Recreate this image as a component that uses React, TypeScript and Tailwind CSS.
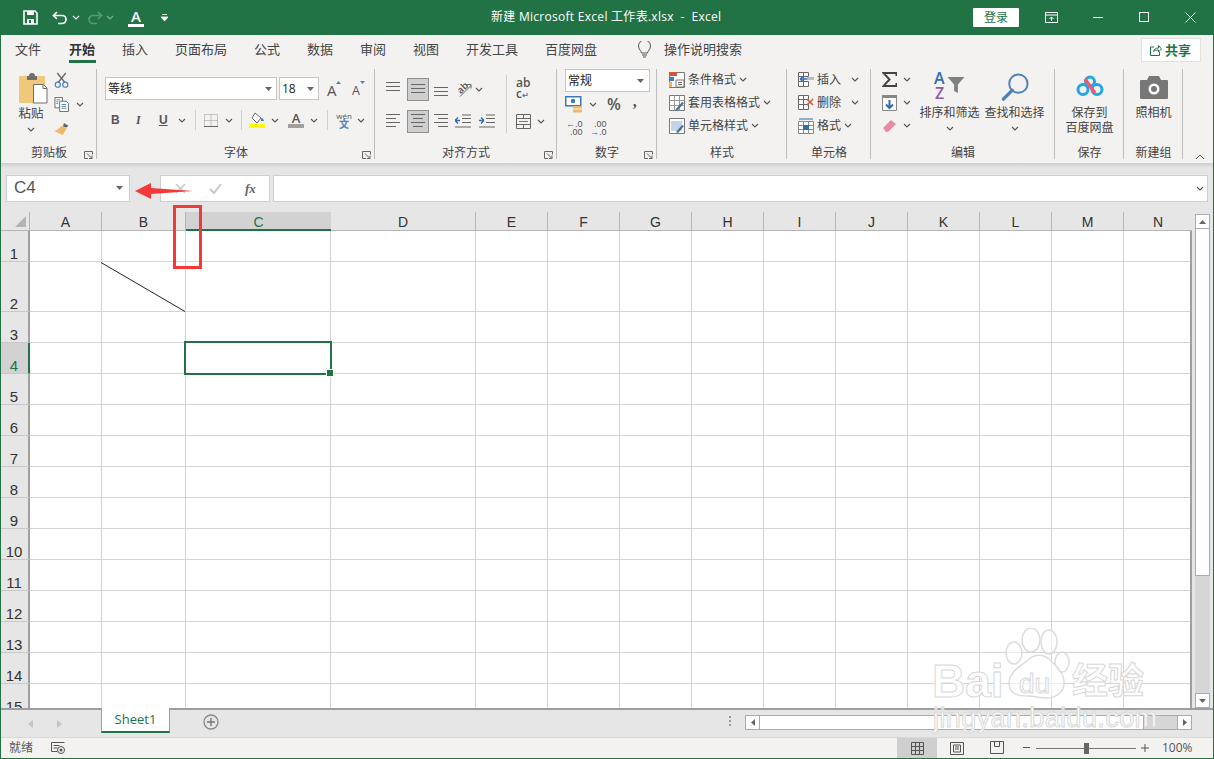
import React from "react";

const FONT = { fontFamily: '"Open Sans","Noto Sans CJK SC","Noto Sans",sans-serif' };
const ARIAL = { fontFamily: '"Liberation Sans",sans-serif' };

function Chev({ c = "#555", className = "" }: { c?: string; className?: string }) {
  return (
    <svg width="8" height="5" viewBox="0 0 8 5" className={"shrink-0 " + className}>
      <path d="M1 1l3 3 3-3" fill="none" stroke={c} strokeWidth="1.1" />
    </svg>
  );
}
function Tri({ className = "" }: { className?: string }) {
  return (
    <svg width="7" height="4" viewBox="0 0 7 4" className={"shrink-0 " + className}>
      <path d="M0 0h7L3.500 4z" fill="#666" />
    </svg>
  );
}
function Launcher() {
  return (
    <svg width="9" height="8" viewBox="0 0 9 8" className="absolute right-[4px] bottom-0">
      <path d="M8.500 3.500V.5H.5v7H4M3 2.500l5 5M8 4.500v3H5" fill="none" stroke="#666" strokeWidth="1" />
    </svg>
  );
}
function Group({ w, label, launcher, children }: { w: number; label: string; launcher?: boolean; children: React.ReactNode }) {
  return (
    <div className="relative shrink-0 flex flex-col h-[90px] mt-[4px]" style={{ width: w }}>
      <div className="h-[74px] relative flex">{children}</div>
      <div className="h-[16px] text-center text-[12px] leading-[20px] text-[#444]">{label}</div>
      {launcher && <Launcher />}
      <div className="absolute right-0 top-0 bottom-0 w-px bg-[#bdbdbd]" />
    </div>
  );
}
function Lines({ w = 14, n = 3, a = "c" }: { w?: number; n?: number; a?: string }) {
  const rows = Array.from({ length: n }, (_, i) => i);
  return (
    <svg width={w} height={n * 4} viewBox={`0 0 ${w} ${n * 4}`} className="shrink-0">
      {rows.map((i) => {
        const short = i % 2 === 1;
        const l = short && a !== "f" ? w - 4 : w;
        const x = a === "l" ? 0 : a === "r" ? w - l : (w - l) / 2;
        return <rect key={i} x={x} y={i * 4 + 1} width={l} height="1" fill="#666" />;
      })}
    </svg>
  );
}
function MiniGrid({ children }: { children?: React.ReactNode }) {
  return (
    <svg width="16" height="16" viewBox="0 0 16 16" className="shrink-0">
      {children}
    </svg>
  );
}
function StyleRow({ icon, text }: { icon: React.ReactNode; text: string }) {
  return (
    <div className="flex items-center h-[23px] text-[12px] text-[#444]">
      {icon}
      <span className="ml-[3px]">{text}</span>
      <Chev className="ml-[3px]" />
    </div>
  );
}
const tableIcon = (
  <MiniGrid>
    <path d="M.5.5h15v15H.5z" fill="#fff" stroke="#777" />
    <path d="M.5 5.500h15M.5 10.500h15M5.500.5v15M10.500.5v15" stroke="#999" />
    <path d="M7 14l6-7 2 1-6 7z" fill="#41719c" />
    <path d="M6 15.500l3-.5-1-2z" fill="#41719c" />
  </MiniGrid>
);

function Ribbon() {
  return (
    <div className="flex h-[98px] bg-[#f3f2f1] shrink-0 relative pl-[1px] text-[#444]">
      {/* clipboard */}
      <Group w={96} label="剪贴板" launcher>
        <div className="w-[53px] pl-[17px] flex flex-col items-start shrink-0">
          <svg width="30" height="31" viewBox="0 0 30 31" className="mt-[4px] shrink-0">
            <path d="M1 3h25a1 1 0 011 1v25a1 1 0 01-1 1H2a1 1 0 01-1-1z" fill="#f0c87c" />
            <path d="M9 3h2a3 3 0 016 0h2v4H9z" fill="#6e6e6e" />
            <path d="M15.500 11.500h10l3.500 3.500v15h-13.500z" fill="#fff" stroke="#6e6e6e" />
            <path d="M25 11.500v4h4" fill="none" stroke="#6e6e6e" />
          </svg>
          <div className="text-[12.5px] leading-[18px] mt-[1px] w-[26px] text-center">粘贴</div>
          <Chev className="ml-[9px] mt-[4px]" />
        </div>
        <div className="flex flex-col pt-[3px]">
          <svg width="16" height="16" viewBox="0 0 16 17">
            <path d="M3 1l8 10M12 1L4 11" stroke="#666" strokeWidth="1.500" fill="none" />
            <circle cx="3.500" cy="13.500" r="2.700" fill="none" stroke="#4d82b8" strokeWidth="1.300" />
            <circle cx="11.500" cy="13.500" r="2.700" fill="none" stroke="#4d82b8" strokeWidth="1.300" />
          </svg>
          <div className="flex items-center mt-[9px]">
            <svg width="16" height="15" viewBox="0 0 16 16">
              <path d="M.5.5h8v11h-8z" fill="#fff" stroke="#666" />
              <path d="M5.500 4.500h7l2.500 2.500v8.500h-9.500z" fill="#fff" stroke="#666" />
              <path d="M7.500 8h5M7.500 10h5M7.500 12h5" stroke="#4d82b8" />
              <path d="M2 3h4M2 5h2M2 7h2" stroke="#4d82b8" />
            </svg>
            <Chev className="ml-[6px]" />
          </div>
          <svg width="16" height="14" viewBox="0 0 16 15" className="mt-[10px]">
            <path d="M10 1l5 3-2 2-4-1z" fill="#666" />
            <path d="M8 4l5 3-4 7-9-4 3-2z" fill="#eeb96d" />
          </svg>
        </div>
      </Group>

      {/* font */}
      <Group w={278} label="字体" launcher>
        <div className="flex flex-col pl-[8px]">
          <div className="flex items-center mt-[8px]">
            <div className="w-[172px] h-[23px] bg-white border border-[#c6c6c6] flex items-center justify-between pl-[2px] pr-[4px] text-[12px] text-[#222]">
              等线
              <Tri />
            </div>
            <div className="ml-[2px] w-[40px] h-[23px] bg-white border border-[#c6c6c6] flex items-center justify-between pl-[2px] pr-[4px] text-[12px] text-[#222]">
              18
              <Tri />
            </div>
            <div className="ml-[8px] text-[15px] text-[#555] leading-none relative w-[11px] mt-[3px]">
              A
              <svg width="5" height="3" viewBox="0 0 5 3" className="absolute -right-[3px] -top-[2px]"><path d="M0 3h5L2.500 0z" fill="#4d82b8" /></svg>
            </div>
            <div className="ml-[14px] text-[12.5px] text-[#555] leading-none relative w-[9px] mt-[5px]">
              A
              <svg width="5" height="3" viewBox="0 0 5 3" className="absolute -right-[4px] -top-[4px]"><path d="M0 0h5L2.500 3z" fill="#4d82b8" /></svg>
            </div>
          </div>
          <div className="flex items-center h-[24px] mt-[8px] text-[#555]">
            <span className="w-[10px] ml-[6px] text-[12px] font-bold" style={ARIAL}>B</span>
            <span className="w-[10px] ml-[15px] text-[12px] font-bold italic" style={{ fontFamily: '"Liberation Serif",serif' }}>I</span>
            <span className="w-[10px] ml-[13px] text-[12px] font-bold underline" style={ARIAL}>U</span>
            <Chev className="ml-[9px]" />
            <div className="w-px h-[20px] bg-[#cfcfcf] ml-[9px]" />
            <svg width="14" height="13" viewBox="0 0 14 13" className="ml-[8px]">
              <path d="M.5.5h13v12H.5zM.5 6.500h13M7 .5v12" fill="none" stroke="#999" strokeDasharray="1 1" />
              <path d="M0 12.500h14" stroke="#666" />
            </svg>
            <Chev className="ml-[7px]" />
            <div className="w-px h-[20px] bg-[#cfcfcf] ml-[8px]" />
            <svg width="16" height="16" viewBox="0 0 16 16" className="ml-[7px]">
              <path d="M6 1l6 5-4 5-5-5z" fill="#fff" stroke="#666" />
              <path d="M12 6c2 0 3 2 3 3h-3z" fill="#4d82b8" />
              <rect x="0" y="12" width="16" height="4" fill="#ffff00" />
            </svg>
            <Chev className="ml-[6px]" />
            <div className="ml-[9px] relative w-[16px] h-[16px] flex flex-col items-center">
              <span className="text-[13px] leading-[12px] font-semibold text-[#555]">A</span>
              <div className="w-[16px] h-[4px] bg-[#a0a0a0]" />
            </div>
            <Chev className="ml-[6px]" />
            <div className="w-px h-[20px] bg-[#cfcfcf] ml-[9px]" />
            <div className="ml-[8px] w-[16px] flex flex-col items-center leading-[9px]">
              <span className="text-[8px] text-[#555]">wén</span>
              <span className="text-[10px] text-[#4d82b8] font-bold">文</span>
            </div>
            <Chev className="ml-[5px]" />
          </div>
        </div>
      </Group>

      {/* alignment */}
      <Group w={182} label="对齐方式" launcher>
        <div className="flex flex-col pl-[11px] w-[131px] shrink-0">
          <div className="flex items-center h-[24px] mt-[8px]">
            <div className="w-[16px] h-[23px] pt-[3px]"><Lines w={14} n={3} a="f" /></div>
            <div className="w-[22px] h-[23px] bg-[#cfcfcf] border border-[#8f8f8f] flex items-center justify-center ml-[5px]"><Lines w={14} n={3} a="f" /></div>
            <div className="w-[16px] h-[23px] ml-[5px] pt-[8px]"><Lines w={14} n={3} a="f" /></div>
            <div className="ml-[6px] w-[16px] h-[15px] relative">
              <span className="absolute left-[1px] top-[0px] text-[9.5px] leading-[12px] text-[#555] -rotate-45 font-semibold">ab</span>
              <svg width="16" height="15" viewBox="0 0 16 15" className="absolute left-0 top-0">
                <path d="M4 14.500L15 3.500M11 2.500h4v4" fill="none" stroke="#666" />
              </svg>
            </div>
            <Chev className="ml-[3px]" />
          </div>
          <div className="flex items-center h-[24px] mt-[8px]">
            <div className="w-[16px]"><Lines w={14} n={4} a="l" /></div>
            <div className="w-[22px] h-[23px] bg-[#cfcfcf] border border-[#8f8f8f] flex items-center justify-center ml-[5px]"><Lines w={14} n={4} a="c" /></div>
            <div className="w-[16px] ml-[5px]"><Lines w={14} n={4} a="r" /></div>
            <svg width="16" height="14" viewBox="0 0 16 14" className="ml-[5px]">
              <path d="M7 1h9M7 4.500h9M7 8.500h9M0 13h16" stroke="#666" />
              <path d="M0 6.500h5M0 6.500l3-3M0 6.500l3 3" stroke="#2f6db3" fill="none" strokeWidth="1.400" />
            </svg>
            <svg width="16" height="14" viewBox="0 0 16 14" className="ml-[8px]">
              <path d="M7 1h9M7 4.500h9M7 8.500h9M0 13h16" stroke="#666" />
              <path d="M0 6.500h5M5 6.500l-3-3M5 6.500l-3 3" stroke="#2f6db3" fill="none" strokeWidth="1.400" />
            </svg>
          </div>
        </div>
        <div className="w-px h-[58px] bg-[#cfcfcf] mt-[6px] shrink-0" />
        <div className="flex flex-col pl-[9px]">
          <div className="h-[24px] mt-[8px] w-[14px] text-[12px] leading-[11px] text-[#555] font-semibold whitespace-nowrap">
            <div>ab</div>
            <div>c<span className="text-[#4d82b8] text-[8px]">↵</span></div>
          </div>
          <div className="flex items-center h-[24px] mt-[8px]">
            <svg width="15" height="15" viewBox="0 0 15 15">
              <path d="M.5.5h14v14H.5zM.5 4.500h14M.5 10.500h14M7.500.5v4M7.500 10.500v4" fill="none" stroke="#666" />
              <path d="M3 7.500h9" stroke="#4d82b8" />
            </svg>
            <Chev className="ml-[6px]" />
          </div>
        </div>
      </Group>

      {/* number */}
      <Group w={100} label="数字" launcher>
        <div className="flex flex-col pl-[8px]">
          <div className="w-[85px] h-[23px] bg-white border border-[#c6c6c6] flex items-center justify-between pl-[2px] pr-[5px] text-[12px] text-[#222]">
            常规
            <Tri />
          </div>
          <div className="flex items-center h-[24px]">
            <svg width="17" height="17" viewBox="0 0 17 17" className="ml-[0px]">
              <rect x=".75" y=".75" width="15" height="9" fill="#fff" stroke="#3a79b8" strokeWidth="1.500" />
              <circle cx="8" cy="5" r="2.200" fill="#3a79b8" />
              <path d="M8 10h9v2.500H8zM8 13.500h9v3H8z" fill="#eeb96d" />
            </svg>
            <Chev className="ml-[7px]" />
            <span className="ml-[10px] text-[16px] leading-none text-[#555] font-semibold">%</span>
            <span className="ml-[12px] text-[16px] leading-none text-[#555] font-bold mt-[-4px]" style={{ fontFamily: '"Liberation Serif",serif' }}>,</span>
          </div>
          <div className="flex items-center h-[24px]">
            <div className="ml-[1px] w-[18px] flex flex-col text-[9px] leading-[8px] text-[#555]" style={ARIAL}>
              <span><span className="text-[#2f6db3]">←</span>.0</span>
              <span className="pl-[4px]">.00</span>
            </div>
            <div className="ml-[6px] w-[18px] flex flex-col text-[9px] leading-[8px] text-[#555]" style={ARIAL}>
              <span className="pl-[4px]">.00</span>
              <span><span className="text-[#2f6db3]">→</span>.0</span>
            </div>
          </div>
        </div>
      </Group>

      {/* styles */}
      <Group w={130} label="样式">
        <div className="flex flex-col pl-[12px] mt-[-1px]">
          <StyleRow text="条件格式" icon={
            <MiniGrid>
              <path d="M.5.5h15v15H.5z" fill="#fff" stroke="#777" />
              <path d="M0 0h8v4H0z" fill="#d0573a" /><path d="M0 5h5v4H0z" fill="#3f7cbf" />
              <path d="M0 10h3v5H0z" fill="#f0b05a" />
              <path d="M7 8h8v7H7z" fill="#fff" stroke="#777" /><path d="M9 10.500h4M9 12.500h4" stroke="#666" />
            </MiniGrid>} />
          <StyleRow text="套用表格格式" icon={tableIcon} />
          <StyleRow text="单元格样式" icon={
            <MiniGrid>
              <path d="M.5.5h15v15H.5z" fill="#fff" stroke="#777" />
              <path d="M2 3h11v10H2z" fill="#c3d4e6" />
              <path d="M7 14l6-7 2 1-6 7z" fill="#41719c" />
            </MiniGrid>} />
        </div>
      </Group>

      {/* cells */}
      <Group w={84} label="单元格">
        <div className="flex flex-col pl-[11px] mt-[-1px] text-[12px]">
          <div className="flex items-center h-[23px]">
            <MiniGrid>
              <path d="M.5.5h5v4h-5zM.5 4.500h5v5h-5zM.5 9.500h5v5h-5zM5.500 9.500h5v5h-5zM5.500.5h5v4h-5z" fill="#fff" stroke="#666" />
              <path d="M9 5h7v3H9z" fill="#bbb" /><path d="M2 7h7M2 7l3-2.500M2 7l3 2.500" stroke="#2f6db3" fill="none" strokeWidth="1.300" />
            </MiniGrid>
            <span className="ml-[3px]">插入</span><Chev className="ml-[10px]" />
          </div>
          <div className="flex items-center h-[23px]">
            <MiniGrid>
              <path d="M.5.5h5v4h-5zM.5 4.500h5v5h-5zM.5 9.500h5v5h-5zM5.500 9.500h5v5h-5zM5.500.5h5v4h-5z" fill="#fff" stroke="#666" />
              <path d="M9 4l6 6M15 4l-6 6" stroke="#d0573a" strokeWidth="1.500" />
            </MiniGrid>
            <span className="ml-[3px]">删除</span><Chev className="ml-[10px]" />
          </div>
          <div className="flex items-center h-[23px]">
            <MiniGrid>
              <path d="M.5 3.500h15v12H.5zM.5 7.500h15M.5 11.500h15M5.500 3.500v12M10.500 3.500v12" fill="#fff" stroke="#888" />
              <path d="M5 7h6v5H5z" fill="#2f6db3" /><path d="M1 1h14" stroke="#2f6db3" />
            </MiniGrid>
            <span className="ml-[3px]">格式</span><Chev className="ml-[3px]" />
          </div>
        </div>
      </Group>

      {/* editing */}
      <Group w={184} label="编辑">
        <div className="flex flex-col pl-[11px] w-[47px] shrink-0 mt-[-1px]">
          <div className="flex items-center h-[23px]">
            <svg width="15" height="15" viewBox="0 0 15 15" className="shrink-0">
              <path d="M14.500 4V1H1.500l6 6.500-6 6.500h13v-3" fill="none" stroke="#444" strokeWidth="2" />
            </svg>
            <Chev className="ml-[6px]" />
          </div>
          <div className="flex items-center h-[23px]">
            <svg width="15" height="16" viewBox="0 0 15 16" className="shrink-0"><path d="M.5.5h14v15H.5z" fill="#fff" stroke="#888" /><path d="M0 0h15v3H0z" fill="#888" /><path d="M7.500 5v8M4 9.500l3.500 3.500 3.500-3.500" fill="none" stroke="#2f6db3" strokeWidth="2" /></svg>
            <Chev className="ml-[6px]" />
          </div>
          <div className="flex items-center h-[23px]">
            <svg width="15" height="14" viewBox="0 0 15 14" className="shrink-0"><path d="M1 9l8-8 5 4-8 8H4z" fill="#e88ba0" /></svg>
            <Chev className="ml-[6px]" />
          </div>
        </div>
        <div className="w-[65px] shrink-0 ml-[-1px] flex flex-col items-center text-[12px] whitespace-nowrap">
          <div className="h-[29px] relative w-[31px] mt-[4px]">
            <span className="absolute left-0 top-[-2px] text-[16px] font-semibold leading-[15px] text-[#2f6db3]">A</span>
            <span className="absolute left-[1px] top-[13px] text-[16px] font-semibold leading-[15px] text-[#8a5bb0]">Z</span>
            <svg width="18" height="16" viewBox="0 0 18 17" className="absolute right-0 top-[4px]"><path d="M0 0h18l-7 8v9l-4-2V8z" fill="#808080" /></svg>
          </div>
          <div className="leading-[17px] mt-[2px]">排序和筛选</div>
          <Chev className="mt-[5px]" />
        </div>
        <div className="w-[65px] shrink-0 flex flex-col items-center text-[12px] whitespace-nowrap">
          <svg width="30" height="29" viewBox="0 0 30 30" className="mt-[4px]">
            <circle cx="18.500" cy="11" r="9.500" fill="none" stroke="#4d82b8" strokeWidth="2" />
            <path d="M12 18L3 27" stroke="#4d82b8" strokeWidth="3.500" strokeLinecap="round" />
          </svg>
          <div className="leading-[17px] mt-[2px]">查找和选择</div>
          <Chev className="mt-[5px]" />
        </div>
      </Group>

      {/* save */}
      <Group w={69} label="保存">
        <div className="w-full flex flex-col items-center text-[12px]">
          <svg width="28" height="22" viewBox="0 0 28 22" className="mt-[6px]">
            <circle cx="7" cy="14.500" r="5" fill="none" stroke="#1fa6ea" strokeWidth="3" />
            <circle cx="21" cy="14.500" r="5" fill="none" stroke="#1fa6ea" strokeWidth="3" />
            <circle cx="14" cy="6.500" r="4.500" fill="none" stroke="#1fa6ea" strokeWidth="3" />
            <path d="M9 4L19 18" stroke="#ee5a6f" strokeWidth="3.500" />
          </svg>
          <div className="leading-[15px] mt-[8px]">保存到</div>
          <div className="leading-[15px]">百度网盘</div>
        </div>
      </Group>

      {/* camera */}
      <Group w={59} label="新建组">
        <div className="w-full flex flex-col items-center text-[12px]">
          <svg width="28" height="23" viewBox="0 0 28 23" className="mt-[7px]">
            <path d="M1 4h6l2-4h10l2 4h6a1 1 0 011 1v17a1 1 0 01-1 1H1a1 1 0 01-1-1V5a1 1 0 011-1z" fill="#777" />
            <circle cx="14" cy="13" r="5.500" fill="#fff" />
            <circle cx="14" cy="13" r="3" fill="#777" />
          </svg>
          <div className="leading-[15px] mt-[6px]">照相机</div>
        </div>
      </Group>

      <svg width="10" height="6" viewBox="0 0 10 6" className="absolute right-[9px] bottom-[3px]"><path d="M1 5l4-4 4 4" fill="none" stroke="#555" /></svg>
    </div>
  );
}

const COLS: [string, number][] = [["A", 72], ["B", 84], ["C", 145], ["D", 145], ["E", 72], ["F", 72], ["G", 72], ["H", 72], ["I", 72], ["J", 72], ["K", 72], ["L", 72], ["M", 72], ["N", 69]];
const ROWS: number[] = [31, 50, 31, 31, 31, 31, 31, 31, 31, 31, 31, 31, 31, 31, 31];

export default function App() {
  return (
    <div className="w-[1214px] h-[759px] overflow-hidden relative flex flex-col bg-[#e6e6e6] text-[#444]" style={FONT}>
      {/* title bar */}
      <div className="h-[35px] bg-[#217346] flex items-center shrink-0 text-white relative">
        <svg width="15" height="15" viewBox="0 0 15 15" className="ml-[23px]">
          <path d="M1 1h11l2 2v11H1z" fill="none" stroke="#fff" strokeWidth="1.600" />
          <path d="M4 1h7v4H4zM4 9h7v5H4z" fill="#fff" />
          <path d="M6 10h2v3H6z" fill="#217346" />
        </svg>
        <svg width="16" height="14" viewBox="0 0 16 14" className="ml-[14px]">
          <path d="M5 1L1.500 4.500 5 8" fill="none" stroke="#fff" strokeWidth="1.700" />
          <path d="M2 4.500h8a4 4 0 010 8H6" fill="none" stroke="#fff" strokeWidth="1.700" />
        </svg>
        <Chev c="#fff" className="ml-[4px]" />
        <svg width="16" height="14" viewBox="0 0 16 14" className="ml-[7px] opacity-40">
          <path d="M11 1l3.500 3.500L11 8" fill="none" stroke="#a8d5bd" strokeWidth="1.700" />
          <path d="M14 4.500H6a4 4 0 000 8h4" fill="none" stroke="#a8d5bd" strokeWidth="1.700" />
        </svg>
        <Chev c="#7fb59a" className="ml-[3px]" />
        <div className="ml-[14px] w-[16px] flex flex-col items-center">
          <span className="text-[15px] leading-[15px] font-semibold">A</span>
          <div className="w-[16px] h-[3px] bg-white" />
        </div>
        <svg width="7" height="7" viewBox="0 0 7 7" className="ml-[17px]"><path d="M1 .5h5M0 3h7L3.500 7z" stroke="#fff" fill="#fff" strokeWidth=".8" /></svg>
        <div className="absolute left-[491px] top-[8px] text-[12px] leading-[18px] whitespace-pre tracking-[0.28px]">新建 Microsoft Excel 工作表.xlsx  -  Excel</div>
        <div className="absolute left-[973px] top-[8px] w-[46px] h-[19px] bg-white rounded-[1px] flex items-center justify-center text-[12px] text-[#217346]">登录</div>
        <svg width="13" height="11" viewBox="0 0 13 11" className="absolute left-[1045px] top-[12px]">
          <path d="M.5.5h12v10H.5zM.5 3h12" fill="none" stroke="#fff" />
          <path d="M6.500 9V5M4.500 7l2-2 2 2" fill="none" stroke="#fff" />
        </svg>
        <div className="absolute left-[1093px] top-[17px] w-[10px] h-px bg-white" />
        <div className="absolute left-[1139px] top-[12px] w-[10px] h-[10px] border border-white" />
        <svg width="11" height="11" viewBox="0 0 11 11" className="absolute left-[1185px] top-[12px]"><path d="M.5.5l10 10M10.500.5l-10 10" stroke="#fff" /></svg>
      </div>

      {/* tabs */}
      <div className="h-[30px] bg-[#f3f2f1] flex items-start shrink-0 text-[13px] leading-[28px] text-[#444] relative">
        <div className="ml-[15px] w-[54px]">文件</div>
        <div className="w-[53px] h-[28px] font-semibold text-[#333] relative">开始
          <div className="absolute left-0 w-[27px] bottom-0 h-[3px] bg-[#217346]" />
        </div>
        <div className="w-[53px]">插入</div>
        <div className="w-[79px]">页面布局</div>
        <div className="w-[53px]">公式</div>
        <div className="w-[53px]">数据</div>
        <div className="w-[53px]">审阅</div>
        <div className="w-[53px]">视图</div>
        <div className="w-[79px]">开发工具</div>
        <div className="w-[92px]">百度网盘</div>
        <svg width="13" height="18" viewBox="0 0 13 18" className="mt-[6px] ml-[1px]">
          <path d="M3.500 12c0-2-3-3.500-3-7a6 6 0 0112 0c0 3.500-3 5-3 7zM4 14h5M5 16h3" fill="none" stroke="#555" />
        </svg>
        <div className="ml-[13px]">操作说明搜索</div>
        <div className="absolute left-[1141px] top-[3px] w-[60px] h-[24px] bg-white border border-[#e1e1e1] flex items-center pl-[8px] text-[#217346] font-semibold">
          <svg width="12" height="12" viewBox="0 0 12 12" className="mr-[3px]"><path d="M4 3H.5v8.500h9V8M3.500 7.500c.5-2 2-3.500 5-3.500V1.500l3 3.500-3 3V6c-2.500 0-4 .5-5 1.500z" fill="none" stroke="#217346" /></svg>
          共享
        </div>
      </div>

      <Ribbon />

      {/* formula bar */}
      <div className="h-[49px] shrink-0 relative bg-[#e6e6e6] flex pl-[6px] pt-[12px]">
        <div className="absolute left-0 right-0 top-0 h-[5px] bg-gradient-to-b from-[#cfcfcf] to-[#e6e6e6]" />
        <div className="w-[124px] h-[27px] bg-white border border-[#cfcfcf] flex items-center justify-between pl-[7px] pr-[6px] text-[17px] leading-[22px] pb-[2px] text-[#555]" style={ARIAL}>
          C4
          <Tri />
        </div>
        <div className="w-[110px] h-[27px] ml-[30px] bg-white border border-[#cfcfcf] flex items-center text-[#bbb] relative">
          <svg width="11" height="11" viewBox="0 0 11 11" className="ml-[14px]"><path d="M1 1l9 9M10 1l-9 9" stroke="#c8c8c8" strokeWidth="1.600" /></svg>
          <svg width="13" height="11" viewBox="0 0 13 11" className="ml-[23px]"><path d="M1 6l4 4 7-9" fill="none" stroke="#c8c8c8" strokeWidth="2" /></svg>
          <span className="ml-[23px] text-[13px] italic font-bold text-[#666]" style={{ fontFamily: '"Liberation Serif",serif' }}>fx</span>
        </div>
        <div className="ml-[3px] w-[935px] h-[27px] bg-white border border-[#cfcfcf] flex items-center justify-end pr-[3px]">
          <Chev />
        </div>
      </div>

      {/* sheet area: headers and cells, then the vertical scrollbar */}
      <div className="h-[496px] shrink-0 flex relative">
        <div className="w-[1192px] shrink-0 flex flex-col">
          <div className="h-[19px] shrink-0 flex bg-[#e6e6e6] text-[14px] text-[#333]" style={ARIAL}>
            <div className="w-[30px] shrink-0 relative border-r border-b border-[#b5b5b5]">
              <svg width="11" height="11" viewBox="0 0 11 11" className="absolute right-[3px] bottom-[3px]"><path d="M11 0v11H0z" fill="#b4b4b4" /></svg>
            </div>
            {COLS.map(([n, w]) => (
              <div key={n} style={{ width: w }} className={"shrink-0 text-center leading-[21px] " + (n === "C" ? "bg-[#d2d2d2] border-b-2 border-[#217346] text-[#217346]" : "border-r border-b border-[#b5b5b5]")}>
                {n}
              </div>
            ))}
          </div>
          <div className="flex-1 overflow-hidden border-r-2 border-[#a0a0a0] bg-white">
            {ROWS.map((h, i) => (
              <div key={i} className="flex" style={{ height: h }}>
                <div className={"w-[30px] shrink-0 flex items-end justify-center text-[15px] leading-[15px] border-b border-r-2 border-b-[#c8c8c8] " + (i === 3 ? "bg-[#d2d2d2] text-[#217346] border-r-[#217346]" : "bg-[#e6e6e6] text-[#333] border-r-[#a0a0a0]")} style={ARIAL}>
                  {i + 1}
                </div>
                {COLS.map(([n, w]) => (
                  <div key={n} style={{ width: w }} className="shrink-0 border-r border-b border-[#d4d4d4]" />
                ))}
              </div>
            ))}
          </div>
        </div>
        {/* vertical scrollbar */}
        <div className="w-[20px] shrink-0 bg-[#e6e6e6] pl-[3px] pt-[2px] flex flex-col">
          <div className="w-[15px] h-[15px] shrink-0 bg-white border border-[#ababab] flex items-center justify-center"><svg width="7" height="4" viewBox="0 0 7 4"><path d="M0 4h7L3.500 0z" fill="#666" /></svg></div>
          <div className="w-[15px] flex-1 flex flex-col bg-[#d6d6d6]">
            <div className="w-[15px] h-[347px] bg-white border border-[#ababab] border-t-0" />
          </div>
          <div className="w-[15px] h-[15px] shrink-0 bg-white border border-[#ababab] flex items-center justify-center"><Tri /></div>
        </div>
        {/* diagonal, selection */}
        <svg width="85" height="51" viewBox="0 0 85 51" className="absolute left-[101px] top-[50px]"><path d="M0 .5L84 49.500" stroke="#222" strokeWidth="1" /></svg>
        <div className="absolute left-[184px] top-[129px] w-[148px] h-[34px] border-2 border-[#217346]">
          <div className="absolute -right-[4px] -bottom-[4px] w-[6px] h-[6px] bg-[#217346] border border-white box-content" />
        </div>
      </div>

      {/* sheet tabs */}
      <div className="h-[29px] shrink-0 flex border-t-2 border-[#9e9e9e] bg-[#e6e6e6] relative">
        <div className="w-[101px] shrink-0 flex items-center pl-[28px]">
          <svg width="5" height="8" viewBox="0 0 5 8"><path d="M5 0v8L0 4z" fill="#c4c4c4" /></svg>
          <svg width="5" height="8" viewBox="0 0 5 8" className="ml-[24px]"><path d="M0 0v8l5-4z" fill="#c4c4c4" /></svg>
        </div>
        <div className="w-[69px] h-[25px] -mt-[2px] pt-[1px] bg-white border-x border-[#9e9e9e] border-b-2 border-b-[#217346] flex items-center justify-center text-[13px] text-[#217346]">Sheet1</div>
        <svg width="16" height="16" viewBox="0 0 16 16" className="ml-[33px] mt-[4px]"><circle cx="8" cy="8" r="7" fill="none" stroke="#8a8a8a" strokeWidth="1.300" /><path d="M8 4v8M4 8h8" stroke="#777" strokeWidth="1.400" /></svg>
        <div className="absolute left-[729px] top-[6px] flex flex-col gap-[2px]">
          <div className="w-[2px] h-[2px] bg-[#999]" /><div className="w-[2px] h-[2px] bg-[#999]" /><div className="w-[2px] h-[2px] bg-[#999]" />
        </div>
        <div className="absolute left-[745px] top-[5px] w-[447px] h-[15px] flex bg-[#d6d6d6] border border-[#ababab]">
          <div className="w-[14px] h-full bg-white border-r border-[#ababab] flex items-center justify-center"><svg width="4" height="7" viewBox="0 0 4 7"><path d="M4 0v7L0 3.500z" fill="#666" /></svg></div>
          <div className="w-[384px] h-full bg-white border-r border-[#ababab]" />
          <div className="flex-1" />
          <div className="w-[14px] h-full bg-white border-l border-[#ababab] flex items-center justify-center"><svg width="4" height="7" viewBox="0 0 4 7"><path d="M0 0v7l4-3.500z" fill="#666" /></svg></div>
        </div>
      </div>

      {/* status bar */}
      <div className="h-[21px] shrink-0 bg-[#f3f2f1] flex items-center text-[12px] text-[#555] relative border-t border-[#d8d8d8]">
        <span className="ml-[9px]">就绪</span>
        <svg width="14" height="12" viewBox="0 0 14 12" className="ml-[18px]"><path d="M.5.5h13M.5.5v9h6M2.500 3.500h6M2.500 6h4" stroke="#555" fill="none" /><circle cx="10" cy="8" r="3.500" fill="none" stroke="#555" /><circle cx="10" cy="8" r="1.500" fill="#555" /></svg>
        <div className="absolute left-[897px] top-0 h-[20px] w-[40px] bg-[#cfcfcf] flex items-center justify-center">
          <svg width="13" height="13" viewBox="0 0 13 13"><path d="M.5.5h12v12H.5zM4.500.5v12M8.500.5v12M.5 4.500h12M.5 8.500h12" fill="none" stroke="#555" /></svg>
        </div>
        <svg width="14" height="13" viewBox="0 0 14 13" className="absolute left-[950px] top-[4px]"><path d="M.5.5h13v12H.5z" fill="none" stroke="#555" /><path d="M3.500 3h7v7h-7zM5 5h4M5 7h4" fill="none" stroke="#555" /></svg>
        <svg width="14" height="13" viewBox="0 0 14 13" className="absolute left-[990px] top-[3px]"><path d="M.5 12.500V.5h13v12zM4.500.5v5h5v-5" fill="none" stroke="#555" /></svg>
        <div className="absolute left-[1023px] top-[9px] w-[7px] h-px bg-[#555]" />
        <div className="absolute left-[1036px] top-[10px] w-[100px] h-px bg-[#777]" />
        <div className="absolute left-[1084px] top-[5px] w-[5px] h-[11px] bg-[#666]" />
        <svg width="8" height="8" viewBox="0 0 8 8" className="absolute left-[1141px] top-[6px]"><path d="M4 0v8M0 4h8" stroke="#555" /></svg>
        <span className="absolute left-[1162px] top-[1px] text-[12px] leading-[18px]">100%</span>
      </div>
      <div className="flex-1 bg-[#217346]" />

      {/* window frame */}
      <div className="absolute left-0 top-0 bottom-0 w-px bg-[#217346]" />
      <div className="absolute right-0 top-0 bottom-0 w-px bg-[#217346]" />

      {/* red annotations */}
      <div className="absolute left-[173px] top-[205px] w-[29px] h-[64px] border-[3px] border-[#f43838]" />
      <svg width="60" height="18" viewBox="0 0 60 18" className="absolute left-[135px] top-[182px]">
        <path d="M0 9L16 1v5l42 3-42 3v5z" fill="#f43838" />
      </svg>

      {/* watermark */}
      <div className="absolute left-[930px] top-[628px] w-[270px] h-[110px] pointer-events-none">
        <svg width="150" height="75" viewBox="0 0 150 75" className="absolute left-[70px] top-0">
          <g fill="#ffffff" fillOpacity="0.6" stroke="#dcdcdc" strokeWidth="1.500">
            <ellipse cx="14" cy="25" rx="8" ry="11" />
            <ellipse cx="31" cy="12" rx="9" ry="12" />
            <ellipse cx="49" cy="14" rx="8" ry="12" />
            <ellipse cx="62" cy="34" rx="7" ry="10" />
            <path d="M9 55c0-12 14-18 20-24 6-5 14-5 20 0 6 6 15 12 15 24 0 10-9 15-18 15-7 0-11-2-17-2-7 0-20 0-20-13z" />
          </g>
        </svg>
        <div className="absolute left-[2px] top-[30px] text-[46px] leading-[46px] text-white whitespace-nowrap font-bold" style={{ WebkitTextStroke: "1px #d8d8d8", ...ARIAL }}>Bai</div>
        <div className="absolute left-[89px] top-[42px] text-[28px] leading-[28px] text-white whitespace-nowrap" style={{ WebkitTextStroke: "1px #d8d8d8", ...ARIAL }}>du</div>
        <div className="absolute left-[142px] top-[30px] text-[36px] leading-[40px] text-white whitespace-nowrap font-bold" style={{ WebkitTextStroke: "1px #d8d8d8", fontFamily: '"Noto Sans CJK SC",sans-serif' }}>经验</div>
        <div className="absolute left-[3px] top-[75px] text-[27px] leading-[30px] text-white whitespace-nowrap tracking-[0.4px]" style={{ WebkitTextStroke: "1px #d8d8d8", ...ARIAL }}>jingyan.baidu.com</div>
      </div>
    </div>
  );
}
